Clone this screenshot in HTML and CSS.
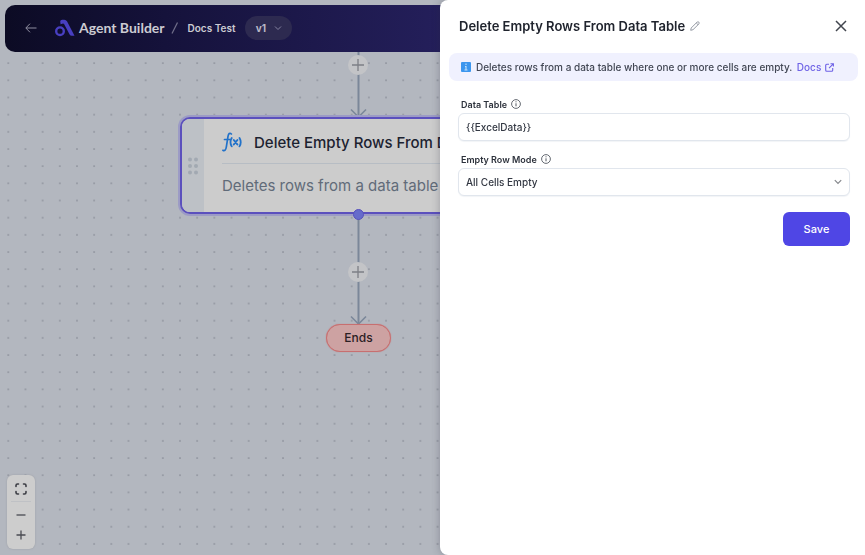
FILE: index.html
```html
<!DOCTYPE html>
<html lang="en">
<head>
<meta charset="utf-8">
<meta name="viewport" content="width=device-width, initial-scale=1">
<title>Agent Builder</title>
<link rel="stylesheet" href="styles.css">
</head>
<body>
<main class="canvas">
  <svg class="canvas-dots" aria-hidden="true">
    <defs>
      <pattern id="dots" width="17.17" height="17.17" patternUnits="userSpaceOnUse" x="-0.3" y="3">
        <circle cx="8.6" cy="8.6" r="0.8" fill="#80848f"/>
      </pattern>
    </defs>
    <rect width="100%" height="100%" fill="url(#dots)"/>
  </svg>

  <svg class="edge edge-in" width="20" height="68" viewBox="0 0 20 68" fill="none" stroke="#7b8799" stroke-width="2" aria-hidden="true">
    <path d="M9.500 0V67"/><path d="M2 59.500L9.500 67L17 59.500" stroke-width="1.600"/>
  </svg>
  <svg class="edge edge-out" width="20" height="110" viewBox="0 0 20 110" fill="none" stroke="#7b8799" stroke-width="2" aria-hidden="true">
    <path d="M9.500 0V109"/><path d="M2 101.500L9.500 109L17 101.500" stroke-width="1.600"/>
  </svg>
  <button class="add add-in" aria-label="Add step before">
    <svg width="12" height="12" viewBox="0 0 12 12" stroke="#7d7f86" stroke-width="1.300"><path d="M6 0V12M0 6H12"/></svg>
  </button>
  <button class="add add-out" aria-label="Add step after">
    <svg width="12" height="12" viewBox="0 0 12 12" stroke="#7d7f86" stroke-width="1.300"><path d="M6 0V12M0 6H12"/></svg>
  </button>

  <article class="node">
    <div class="node-grip">
      <svg width="10" height="18" viewBox="0 0 10 18" fill="#a2a9b2" aria-hidden="true">
        <circle cx="2" cy="2.500" r="2"/><circle cx="8" cy="2.500" r="2"/><circle cx="2" cy="9" r="2"/><circle cx="8" cy="9" r="2"/><circle cx="2" cy="15.500" r="2"/><circle cx="8" cy="15.500" r="2"/>
      </svg>
    </div>
    <div class="node-body">
      <div class="node-head">
        <svg width="20" height="20" viewBox="0 0 20 20" fill="none" stroke="#2272c9" stroke-linecap="round" aria-hidden="true">
          <path d="M9.400 2C7.800 .4 6.500 1.600 6 4.300L4.300 15C3.900 18 2.500 19.400 .9 18.300M2.500 7.500H8.200" stroke-width="1.700"/>
          <path d="M9.700 6C8.300 8.400 8.300 12 9.700 14.400M17.500 6C18.900 8.400 18.900 12 17.500 14.400" stroke-width="1.800"/>
          <path d="M11.800 8L15.400 12.500M15.400 8L11.800 12.500" stroke-width="2"/>
        </svg>
        <h2 class="node-title">Delete Empty Rows From Data Table</h2>
      </div>
      <p class="node-text">Deletes rows from a data table where</p>
    </div>
    <span class="node-port"></span>
  </article>

  <div class="end-node">Ends</div>

  <div class="zoom">
    <button class="zoom-button zoom-fit" aria-label="Fit view">
      <svg width="12" height="12" viewBox="0 0 12 12" fill="none" stroke="#3c3d44" stroke-width="1.600" stroke-linecap="round"><path d="M1 3.500V2.500Q1 1 2.500 1H3.500M8.500 1H9.500Q11 1 11 2.500V3.500M11 8.500V9.500Q11 11 9.500 11H8.500M3.500 11H2.500Q1 11 1 9.500V8.500"/></svg>
    </button>
    <button class="zoom-button" aria-label="Zoom out">
      <svg width="10" height="10" viewBox="0 0 10 10" stroke="#4a4b52" stroke-width="1.300"><path d="M.5 5H9.500"/></svg>
    </button>
    <button class="zoom-button" aria-label="Zoom in">
      <svg width="10" height="10" viewBox="0 0 10 10" stroke="#4a4b52" stroke-width="1.300"><path d="M.5 5H9.500M5 .5V9.500"/></svg>
    </button>
  </div>
</main>

<header class="topbar">
  <button class="back" aria-label="Back">
    <svg width="12" height="10" viewBox="0 0 12 10" fill="none" stroke="#8f8ea0"><path d="M11.500 5H1M5 .7L.8 5L5 9.300"/></svg>
  </button>
  <a class="brand" href="#">
    <svg width="20" height="18" viewBox="0 0 20 18" fill="none" aria-hidden="true">
      <circle cx="5" cy="12.200" r="3.800" stroke="#483fc2" stroke-width="2.400"/>
      <path d="M5.200 2.400Q5.200 .8 7.200 .8H9.300Q11 .8 12 2.300L19.500 16.800H16.600Q15.300 16.800 14.600 15.500L9.200 5.200Q8.500 4.200 7.300 4.700L5.600 5.300Z" fill="#483fc2"/>
    </svg>
    <span>Agent Builder</span>
  </a>
  <svg width="8" height="12" viewBox="0 0 8 12" stroke="#6f6d88" stroke-width="1.200" aria-hidden="true"><path d="M1 11.500L6.500 .5"/></svg>
  <span class="project">Docs Test</span>
  <button class="version">v1
    <svg width="8" height="6" viewBox="0 0 8 6" fill="none" stroke="#8583a0"><path d="M1 1.500L4 4.500L7 1.500"/></svg>
  </button>
</header>

<aside class="panel">
  <div class="panel-head">
    <h1 class="panel-title">Delete Empty Rows From Data Table</h1>
    <button class="icon-button" aria-label="Rename">
      <svg width="10" height="10" viewBox="0 0 10 10" fill="none" stroke="#969ba5" stroke-linejoin="round"><path d="M.7 9.300L1.200 7L7.200 1Q8 .4 8.900 1.200Q9.600 2 9 2.800L3 8.700ZM6.300 2L8 3.700"/></svg>
    </button>
    <button class="icon-button close" aria-label="Close">
      <svg width="12" height="12" viewBox="0 0 12 12" stroke="#42464e" stroke-width="1.500"><path d="M1 1L11 11M11 1L1 11"/></svg>
    </button>
  </div>
  <div class="notice">
    <svg width="10" height="10" viewBox="0 0 10 10" aria-hidden="true"><rect width="10" height="10" rx="1" fill="#3c96ee"/><path d="M5 1.500V3M4 4.500H5V8M3.500 8H6.500" stroke="#c4e2fb" stroke-width="1.100" fill="none"/></svg>
    <p class="notice-text">Deletes rows from a data table where one or more cells are empty. <a class="docs" href="#">Docs
      <svg width="9" height="9" viewBox="0 0 9 9" fill="none" stroke="#6e62e6" stroke-width="1.100"><path d="M4 1.300H1.700Q.7 1.300 .7 2.300V7.300Q.7 8.300 1.700 8.300H6.700Q7.700 8.300 7.700 7.300V5M5.500 .7H8.400V3.600M8.300 .8L4 5.100"/></svg></a></p>
  </div>
  <form class="form">
    <div class="field">
      <label class="label" for="table">Data Table
        <svg width="10" height="10" viewBox="0 0 10 10" fill="none" stroke="#555a63"><circle cx="5" cy="5" r="4.400" stroke-width=".9"/><path d="M5 4.300V7.300M5 2.300V3.300"/></svg>
      </label>
      <input class="control" id="table" type="text" value="{{ExcelData}}">
    </div>
    <div class="field">
      <label class="label" for="mode">Empty Row Mode
        <svg width="10" height="10" viewBox="0 0 10 10" fill="none" stroke="#555a63"><circle cx="5" cy="5" r="4.400" stroke-width=".9"/><path d="M5 4.300V7.300M5 2.300V3.300"/></svg>
      </label>
      <div class="select">
        <select class="control" id="mode"><option>All Cells Empty</option></select>
        <svg class="chevron" width="8" height="6" viewBox="0 0 8 6" fill="none" stroke="#85878c" stroke-width="1.200" aria-hidden="true"><path d="M.8 1.200L4 4.500L7.200 1.200"/></svg>
      </div>
    </div>
    <button class="save" type="button">Save</button>
  </form>
</aside>
</body>
</html>
```
FILE: styles.css
```css
* { box-sizing: border-box; }

body {
  margin: 0;
  min-height: 100vh;
  overflow: hidden;
  background: #b3b7bf;
  color: #20242e;
  font-family: Inter, "Liberation Sans", sans-serif;
}

button {
  display: flex;
  align-items: center;
  justify-content: center;
  padding: 0;
  border: 0;
  background: none;
  font: inherit;
  cursor: pointer;
}

svg { flex: none; }
h1, h2, p { margin: 0; }
a { text-decoration: none; }

/* Flow canvas */
.canvas { position: absolute; inset: 0; }
.canvas-dots { position: absolute; inset: 0; width: 100%; height: 100%; }

.edge { position: absolute; left: 349px; }
.edge-in { top: 50px; }
.edge-out { top: 215px; }

.add {
  position: absolute;
  left: 348px;
  width: 20px;
  height: 20px;
  border-radius: 50%;
  background: #c3c4c7;
}
.add-in { top: 55px; }
.add-out { top: 262px; }

.node {
  position: absolute;
  top: 117px;
  left: 180px;
  display: flex;
  width: 358px;
  height: 97px;
  border: 2px solid #5b50bd;
  border-radius: 10px;
  background: #cccccc;
  box-shadow: 0 0 0 2px #9c9bc5;
}
.node-grip {
  display: flex;
  align-items: center;
  justify-content: center;
  width: 22px;
  border-radius: 8px 0 0 8px;
  background: #bdc1c6;
}
.node-body { flex: 1; min-width: 0; padding: 0 18px; overflow: hidden; white-space: nowrap; }
.node-head {
  display: flex;
  align-items: center;
  gap: 12px;
  height: 45px;
  border-bottom: 1px solid #b7bdc4;
  padding-top: 2px;
}
.node-title { color: #1c2230; font-size: 15px; font-weight: 500; }
.node-text { color: #616b79; font-size: 15px; line-height: 44px; }
.node-port {
  position: absolute;
  bottom: -8px;
  left: 171px;
  width: 11px;
  height: 11px;
  border: 1px solid #5751bd;
  border-radius: 50%;
  background: #666bcb;
}

.end-node {
  position: absolute;
  top: 324px;
  left: 326px;
  width: 65px;
  border: 1px solid #c76f70;
  border-radius: 14px;
  background: #cda2a2;
  box-shadow: 0 0 1px #c76f70;
  color: #2b2024;
  font-size: 12px;
  font-weight: 500;
  line-height: 26px;
  text-align: center;
}

.zoom {
  position: absolute;
  bottom: 6px;
  left: 7px;
  width: 28px;
  padding: 1px 4px 4px;
  border-radius: 6px;
  background: #cdcdcd;
  box-shadow: 0 0 2px #9a9da3;
}
.zoom-button { width: 20px; height: 20px; }
.zoom-fit { height: 26px; margin-bottom: 3px; border-bottom: 1px solid #bfc1c5; }

/* Top bar */
.topbar {
  position: relative;
  display: flex;
  align-items: center;
  height: 47px;
  margin: 5px 5px 0;
  padding: 0 20px 2px;
  border-radius: 10px;
  background: linear-gradient(90deg, #0c0b24 0, #15123b 160px, #241f5b 440px, #30297a 100%);
  color: #cccbd2;
}
.back { width: 12px; margin-right: 18px; }
.brand {
  display: flex;
  align-items: center;
  gap: 4px;
  margin-right: 6px;
  color: inherit;
  font-family: Lato, Inter, sans-serif;
  font-size: 14px;
  font-weight: 700;
}
.project { margin: 0 10px 0 9px; font-size: 10px; font-weight: 600; }
.version {
  gap: 8px;
  width: 47px;
  height: 24px;
  border-radius: 12px;
  background: #2d2a50;
  color: #b9b8c6;
  font-size: 10px;
  font-weight: 700;
}

/* Settings drawer */
.panel {
  position: fixed;
  inset: 0 0 0 auto;
  width: 425px;
  max-width: 100%;
  padding: 0 7px 0 9px;
  border-radius: 8px 0 0 8px;
  background: #ffffff;
  box-shadow: 0 0 8px rgba(40, 44, 60, 0.3);
}
.panel-head { display: flex; align-items: center; height: 53px; padding: 0 11px 2px 10px; }
.panel-title { font-size: 13px; font-weight: 600; }
.icon-button { margin-left: 5px; }
.close { margin-left: auto; }
.notice {
  display: flex;
  align-items: center;
  gap: 5px;
  height: 28px;
  padding: 0 12px;
  border-radius: 8px;
  background: #f0f1fe;
}
.notice-text { color: #424754; font-size: 10px; font-weight: 500; white-space: nowrap; }
.docs { margin-left: 2px; color: #6e62e6; }
.docs svg { margin-left: 1px; vertical-align: -1px; }
.form { display: flex; flex-direction: column; padding: 16px 8px 0 9px; }
.field { margin-bottom: 11px; }
.label {
  display: flex;
  align-items: center;
  gap: 4px;
  height: 14px;
  margin: 0 0 2px 3px;
  color: #2c313b;
  font-size: 9px;
  font-weight: 600;
}
.control {
  display: block;
  width: 100%;
  height: 28px;
  padding: 0 7px;
  border: 1px solid #e1e6ed;
  border-radius: 6px;
  background: #ffffff;
  color: #333843;
  font-family: inherit;
  font-size: 10px;
  font-weight: 500;
  box-shadow: 0 1px 1px #f2f4f7;
  appearance: none;
}
.select { position: relative; }
.chevron { position: absolute; top: 11px; right: 8px; pointer-events: none; }
.save {
  align-self: flex-end;
  width: 67px;
  height: 34px;
  margin-top: 5px;
  border-radius: 6px;
  background: #4f46e5;
  color: #ffffff;
  font-size: 11px;
  font-weight: 500;
}
```
